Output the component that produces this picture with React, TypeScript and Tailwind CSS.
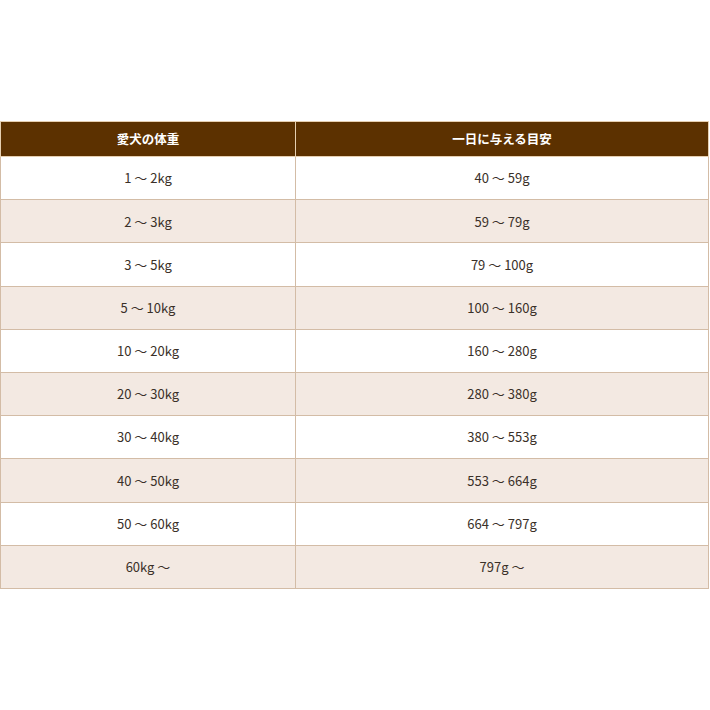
const rows: [string, string][] = [
  ['1 〜 2kg', '40 〜 59g'],
  ['2 〜 3kg', '59 〜 79g'],
  ['3 〜 5kg', '79 〜 100g'],
  ['5 〜 10kg', '100 〜 160g'],
  ['10 〜 20kg', '160 〜 280g'],
  ['20 〜 30kg', '280 〜 380g'],
  ['30 〜 40kg', '380 〜 553g'],
  ['40 〜 50kg', '553 〜 664g'],
  ['50 〜 60kg', '664 〜 797g'],
  ['60kg 〜', '797g 〜'],
];

export default function App() {
  return (
    <div
      className="w-[710px] h-[710px] bg-white pt-[121px]"
      style={{ fontFamily: '"Noto Sans CJK JP", "Noto Sans", sans-serif' }}
    >
      <table className="w-[709px] border-collapse table-fixed">
        <thead>
          <tr className="h-[35px] bg-[#5c3100] text-white">
            <th className="w-[295px] border border-[#e6cfb0] text-[12.5px] font-bold">愛犬の体重</th>
            <th className="border border-[#e6cfb0] text-[12.5px] font-bold">一日に与える目安</th>
          </tr>
        </thead>
        <tbody>
          {rows.map(([w, g], i) => (
            <tr key={i} className={`h-[43.2px] ${i % 2 === 1 ? 'bg-[#f3e9e2]' : 'bg-white'}`}>
              <td className="border border-[#d3bca6] text-center text-[13px] text-[#3a3028]">{w}</td>
              <td className="border border-[#d3bca6] text-center text-[13px] text-[#3a3028]">{g}</td>
            </tr>
          ))}
        </tbody>
      </table>
    </div>
  );
}
